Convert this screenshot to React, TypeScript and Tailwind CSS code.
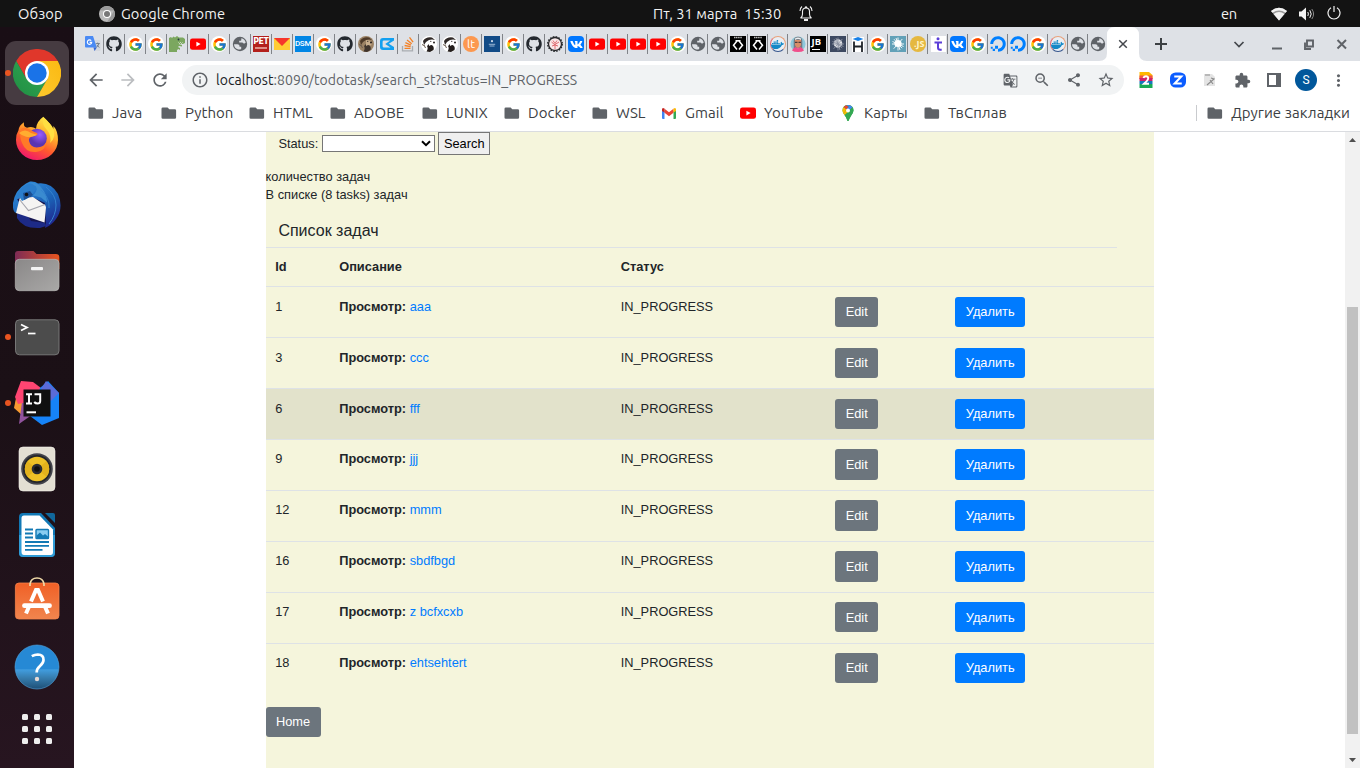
import React from "react";
import { FaGithub, FaVk, FaDocker, FaDigitalOcean } from "react-icons/fa";
import { FcGoogle } from "react-icons/fc";
import {
  MdArrowBack, MdArrowForward, MdRefresh, MdInfoOutline, MdGTranslate, MdOutlineZoomOut,
  MdShare, MdStarBorder, MdExtension, MdMoreVert,
} from "react-icons/md";

const UI = "font-[Ubuntu,'Noto_Sans',sans-serif]";

/* ---------- favicons ---------- */

const Google = () => (
  <span className="flex size-4 items-center justify-center rounded-full bg-white"><FcGoogle size={15} /></span>
);
const Github = () => <FaGithub size={16} color="#24292f" />;
const Globe = () => (
  <svg width="16" height="16" viewBox="0 0 16 16">
    <circle cx="8" cy="8" r="7.200" fill="#5f6368" />
    <path d="M2 8.200h3.500q2 0 2 1.600v.9h1.700v2.200q-1.600 1.200-3.600.4Q2.200 12 2 8.200z" fill="#dee1e6" />
    <path d="M9.300 2.300q3.700.8 4.400 4.500l-1.800.9q-.8-1.300-2-1.300H7.200V4.700h1.600q.5 0 .5-.7z" fill="#dee1e6" />
  </svg>
);
const YouTube = () => (
  <svg width="16" height="16" viewBox="0 0 16 16">
    <rect x="0" y="2.400" width="16" height="11.400" rx="2.400" fill="#f00" />
    <path d="M6.400 5.700v4.800l4.200-2.400z" fill="#fff" />
  </svg>
);
const Translate = () => (
  <svg width="16" height="16" viewBox="0 0 16 16">
    <path d="M6 4h8.600q1 0 1 1v9q0 1-1 1H9z" fill="#d5d8de" />
    <path d="M1 0h7l3.800 11.500H1q-1 0-1-1V1q0-1 1-1z" fill="#4a8af4" />
    <path d="M8.500 11.500h3.300L9.600 15z" fill="#3367d6" />
    <path d="M6.200 4.700A2.200 2.200 0 1 0 6.700 6.400H4.600" fill="none" stroke="#fff" strokeWidth="1.100" />
    <path d="M10.800 7.600h4M12.700 6.600v1M13.800 7.700q-.6 2.400-2.400 3.600M12 9q1 1.600 2.400 2.400" fill="none" stroke="#6b7785" strokeWidth=".9" />
  </svg>
);
const Dino = () => (
  <svg width="16" height="16" viewBox="0 0 16 16">
    <path d="M0 2l2-1 1 1 1.500-1.500L6 1.500 8 0l2 1.500h4l2 1.500v4l-2 1H9.500L13 9v1.500L10 10l-1 1 2 1v2l-1.500-1L8 14v2H0z" fill="#7ba75f" />
    <path d="M9.500 6.500l1 1 1-1 1 1 1-1" stroke="#fff" strokeWidth=".7" fill="none" />
    <circle cx="9.500" cy="3.500" r=".9" fill="#234" />
  </svg>
);
const Pet = () => (
  <span className="flex size-4 flex-col items-center bg-[#b3201c] font-['Roboto',sans-serif] text-[8.500px]/[11px] font-black tracking-[-0.2px] text-white">
    PET<span className="h-[2px] w-3 bg-[#df8e86]" />
  </span>
);
const Mail = () => (
  <svg width="16" height="16" viewBox="0 0 16 16"><path d="M0 2h16v12H0z" fill="#fc3" /><path d="M0 2h16L8 10z" fill="#f6352c" /></svg>
);
const Dsm = () => (
  <span className="flex size-4 items-center justify-center overflow-hidden bg-[#0086e5] font-['Roboto',sans-serif] text-[8px] font-medium tracking-[-0.3px] text-white">DSM</span>
);
const Beaver = ({ brown = false }: { brown?: boolean }) => (
  <svg width="16" height="16" viewBox="0 0 16 16">
    <circle cx="8" cy="8" r="8" fill={brown ? "#9b8264" : "#fff"} />
    <path d="M2 5Q5 .5 11 1.500l3 2.500-3-.5-3 .5-3 2-2 3z" fill={brown ? "#4d3a29" : "#302a28"} />
    <path d="M5.500 15.500q2-3 .5-5.500l2.500-2.500 2.500 1.500q2.500 2 1.500 5L9 16z" fill={brown ? "#3f342c" : "#241e1c"} />
    <path d="M8 4q4-.5 6 3l-1 2.500-3-.6-2 1z" fill={brown ? "#c7ad8b" : "#fff"} />
    <circle cx="13" cy="6.500" r="1" fill="#241e1c" /><circle cx="9.800" cy="5.300" r=".6" fill="#241e1c" />
    <path d="M3 9l1.500 3M1.500 8l1 2" stroke="#6b5d50" strokeWidth="1" />
  </svg>
);
const Cyan = () => (
  <svg width="16" height="16" viewBox="0 0 16 16"><path d="M1 5q0-3 3-3h11v2.500L9.800 7.700 15 11v3H4q-3 0-3-3zM3.600 5.800v4.400q0 1.400 1.400 1.400h6.500L6.200 8l5-3.600H5q-1.400 0-1.400 1.400z" fill="#12a0f0" fillRule="evenodd" /></svg>
);
const Stack = () => (
  <svg width="16" height="16" viewBox="0 0 16 16" fill="none"><path d="M2.500 10v4.800h10V10" stroke="#a9adb1" strokeWidth="1.300" /><path d="M4.500 12.300h6M4.600 9.500l6 1.200M5.400 6.700l5.500 2.500M7 4l4.700 3.800M9.500 1.300l3.600 4.900" stroke="#f48024" strokeWidth="1.300" /></svg>
);
const Lt = () => (
  <span className={`flex size-4 items-center justify-center rounded-full bg-[#fc984f] text-[12px] text-white ${UI}`}>lt</span>
);
const Navy = () => (
  <svg width="16" height="16" viewBox="0 0 16 16"><path d="M0 0h16v16H0z" fill="#114b87" /><circle cx="8" cy="5.200" r="1.100" fill="#cbd8e6" /><path d="M4.800 8.300h6.400M5.500 10h5" stroke="#a9c2dc" strokeWidth=".9" /></svg>
);
const Gear = () => (
  <svg width="16" height="16" viewBox="0 0 16 16">
    <circle cx="8" cy="8" r="6.500" fill="#f9e9e9" stroke="#26282b" strokeWidth="1.300" />
    <circle cx="8" cy="8" r="7.300" fill="none" stroke="#26282b" strokeWidth="1.300" strokeDasharray="1.600 1.300" />
    <path d="M8 13V8M8 9L4.500 6M8 8.500L12 6M5 10l3-1 3 1M6 4.500l2 3 2-3" stroke="#e06b70" fill="none" />
  </svg>
);
const Vk = () => (
  <span className="flex size-4 items-center justify-center rounded-[4px] bg-[#07f] text-white"><FaVk size={13} /></span>
);
const Bracket = () => (
  <svg width="16" height="16" viewBox="0 0 16 16">
    <path d="M0 0h16v16H0z" fill="#000" />
    <path d="M4 1.500h8" stroke="#bbb" strokeDasharray="1.300 .5" strokeWidth="1.300" />
    <path d="M7 5L3.500 9.200 7 13.500M9 5l3.500 4.200L9 13.500M5.500 4.700h5" fill="none" stroke="#fff" strokeWidth="1.500" />
  </svg>
);
const Docker = () => (
  <span className="flex size-4 items-center justify-center rounded-full border border-t-[#e9a27c] border-r-[#e9a27c] border-b-[#35558c] border-l-[#e46a72] bg-[#e8eef4]"><FaDocker size={13} color="#1488c6" /></span>
);
const Woman = () => (
  <svg width="16" height="16" viewBox="0 0 16 16">
    <circle cx="8" cy="8" r="7.600" fill="#8fc8dc" />
    <path d="M3.700 12V5Q4 .8 8 .8T12.300 5v7z" fill="#77797f" />
    <path d="M5 4h6v5q-1 3-3 3t-3-3z" fill="#d98d68" /><path d="M5 4q3-2 6 0V2.500Q8 .5 5 2.500z" fill="#e9edf0" />
    <path d="M5 6.300h2.500M8.500 6.300H11" stroke="#4b3b3b" strokeWidth="1.200" />
    <path d="M2 14.500q1-3 4-3.500l2 1.500 2-1.500q3 .5 4 3.500-2 1.500-6 1.500t-6-1.500z" fill="#f04f8b" />
  </svg>
);
const Jb = () => (
  <span className="flex size-4 flex-col justify-between bg-black px-[2px] pb-[2px] font-['Noto_Sans',sans-serif] text-[9.500px]/[11px] font-bold text-white">
    JB<span className="h-px w-2 bg-white" />
  </span>
);
const Burst = ({ dark = false }: { dark?: boolean }) => (
  <svg width="16" height="16" viewBox="0 0 16 16">
    <path d="M0 0h16v16H0z" fill={dark ? "#3d4961" : "#62a1b8"} />
    <circle cx="8" cy="7.500" r={dark ? "4.300" : "3.600"} fill={dark ? "#e1e3e8" : "#fff"} />
    <path d="M8 1.500v13M2 8h12M4 3.200l8 9M12.300 3L3.700 12.700M6 2l4 12M2.500 5.500l11 5" stroke={dark ? "#8c93a3" : "#fff"} strokeWidth=".9" />
  </svg>
);
const Hexlet = () => (
  <svg width="16" height="16" viewBox="0 0 16 16">
    <path d="M2 1h12v15H2z" fill="#fff" /><path d="M4 5.500V16M12 5.500V16M4 10.500h8" stroke="#20242a" strokeWidth="1.800" fill="none" /><path d="M2.500 3L8 1l5.500 2L8 5z" fill="#1680e8" />
  </svg>
);
const Js = () => (
  <span className="flex size-4 items-center justify-end rounded-full bg-[#e5b840] pr-px font-['Noto_Sans',sans-serif] text-[9px] font-bold text-[#fff4ca]">.JS</span>
);
const Tee = () => (
  <svg width="16" height="16" viewBox="0 0 16 16"><path d="M1 0h15v16H1z" fill="#fff" /><circle cx="8" cy="2.800" r="1.500" fill="#5b3fd8" /><path d="M4.500 6.500h7.500M8 6.500v5q0 2.300 2.200 2.300h1.500" stroke="#5b3fd8" strokeWidth="2" fill="none" /></svg>
);
const Ocean = () => <FaDigitalOcean size={16} color="#0080ff" />;

const tabs: React.ReactNode[] = [
  <Translate />, <Github />, <Google />, <Google />, <Dino />, <YouTube />, <Google />, <Globe />, <Pet />, <Mail />,
  <Dsm />, <Google />, <Github />, <Beaver brown />, <Cyan />, <Stack />, <Beaver />, <Beaver />, <Lt />, <Navy />,
  <Google />, <Github />, <Gear />, <Vk />, <YouTube />, <YouTube />, <YouTube />, <YouTube />, <Google />, <Globe />,
  <Globe />, <Bracket />, <Bracket />, <Docker />, <Woman />, <Jb />, <Burst dark />, <Hexlet />, <Google />, <Burst />,
  <Js />, <Tee />, <Vk />, <Google />, <Ocean />, <Ocean />, <Google />, <Docker />, <Globe />, <Globe />,
];

/* ---------- dock icons ---------- */

const Chrome = () => (
  <svg width="48" height="48" viewBox="0 0 48 48">
    <defs>
      <linearGradient id="cy" x1="1" y1="0" x2="0" y2="1"><stop stopColor="#fbb912" /><stop offset="1" stopColor="#fdc92e" /></linearGradient>
      <linearGradient id="cg" x1="0" y1="1" x2="1" y2="0"><stop stopColor="#1f8e43" /><stop offset="1" stopColor="#34a853" /></linearGradient>
    </defs>
    <path d="M3.200 12A24 24 0 0 1 44.800 12H24L13.600 30z" fill="#e0372b" />
    <path d="M3.200 12A24 24 0 0 0 24 48L34.400 30H13.600z" fill="url(#cg)" />
    <path d="M24 48A24 24 0 0 0 44.800 12H24L34.400 30z" fill="url(#cy)" />
    <circle cx="24" cy="24" r="12" fill="#fff" /><circle cx="24" cy="24" r="9.700" fill="#1a73e8" />
  </svg>
);
const Firefox = () => (
  <svg width="48" height="48" viewBox="0 0 48 48">
    <defs>
      <linearGradient id="ff" x1=".8" y1="0" x2=".3" y2="1"><stop stopColor="#fff44f" /><stop offset=".35" stopColor="#ffb12c" /><stop offset=".65" stopColor="#ff5a2d" /><stop offset="1" stopColor="#f0156f" /></linearGradient>
      <radialGradient id="fp" cx=".65" cy=".3"><stop stopColor="#9a5cff" /><stop offset="1" stopColor="#5a35b0" /></radialGradient>
    </defs>
    <path d="M30.300 1.700q-7 5-7.300 12-4-3-9-1-4-1-3-5.500-5 3-5.500 8Q3 19 3 25a21 20 0 0 0 42 0q0-9-4.500-14 0 3-1 4-1-6-9.200-13.300z" fill="url(#ff)" />
    <circle cx="24" cy="23.500" r="9.800" fill="url(#fp)" />
    <path d="M8 14q3-3 8 0 5 3 8 4 2 2-3 3-6 1-5 5 2 8 11 6 5-1 7-6-1 10-11 11T9 28Q6 21 8 14z" fill="#ff7a27" />
    <path d="M6 18q6-5 12 0 4 1 5.500 1.500-.5 1.700-4 2-4 1-7 0-4-1-6.500-3.500z" fill="#ffad30" />
    <path d="M31 3q-3 6 3 12 5 6 3 13 7-6 3-15-2-4-9-10z" fill="#ffdf42" />
  </svg>
);
const Thunderbird = () => (
  <svg width="48" height="48" viewBox="0 0 48 48">
    <defs><linearGradient id="tb" x1=".2" y1="0" x2=".8" y2="1"><stop stopColor="#2f8ede" /><stop offset=".55" stopColor="#1b5fb4" /><stop offset="1" stopColor="#20208a" /></linearGradient></defs>
    <path d="M17 .5q5-.5 8 2Q38 1 45 13q6 14-2 25-4 6-11 9l1-6-14-2-12-7Q-1 34 0 22 2 9 13 2.500z" fill="url(#tb)" />
    <path d="M4 30l28 11 1 4-6 2Q10 48 4 37z" fill="#1d2a86" />
    <path d="M4 18l8-5 20 9 1 20-15-2z" fill="#171650" />
    <path d="M7 16l1 1 12-1 12.500 8.500.5 2-1.500 15L3 32z" fill="#f5f4f3" /><path d="M6.500 18.500L15.500 29.500 32 23.500" fill="none" stroke="#a5a5ad" strokeWidth="1.100" />
    <path d="M3 19q2-12 12-16l10 1q-1 4-4 7-2 5-12 9l-2-3z" fill="#2b7dcb" />
    <path d="M17 1.500q9 0 12 6 5 6 5 14l-6-5-8-2q5-5 3-9z" fill="#3a8bd0" />
    <path d="M10 12l7-2 3 4-9 5z" fill="#1c4f93" /><circle cx="13.500" cy="13.500" r="1.800" fill="#111" />
    <path d="M33 6q10 8 10 18t-7 19M28 9q9 8 8 18" fill="none" stroke="#3482cf" strokeWidth="1" />
  </svg>
);
const Files = () => (
  <svg width="48" height="48" viewBox="0 0 48 48">
    <defs>
      <linearGradient id="fb"><stop stopColor="#7d2b55" /><stop offset="1" stopColor="#e9551f" /></linearGradient>
      <linearGradient id="fg" x1="0" y1="0" x2="1" y2="1"><stop stopColor="#8a8888" /><stop offset="1" stopColor="#a9a8a7" /></linearGradient>
    </defs>
    <path d="M5 4h15.500l3 3H43q3.300 0 3.300 3v12H2V7q0-3 3-3z" fill="url(#fb)" />
    <rect x="2.300" y="12.300" width="43.700" height="31.400" rx="4" fill="url(#fg)" stroke="#b9b7b6" strokeWidth=".7" />
    <rect x="18" y="20" width="12" height="3.200" rx="1" fill="#f4f4f4" />
  </svg>
);
const Terminal = () => (
  <svg width="48" height="48" viewBox="0 0 48 48">
    <rect x="2.500" y="6.800" width="43.500" height="35" rx="4" fill="#4c4c4c" stroke="#777" />
    <path d="M8 11.500l6 3L8 17.500" fill="none" stroke="#fff" strokeWidth="1.800" /><path d="M15 20.500h7.500" stroke="#fff" strokeWidth="1.700" />
  </svg>
);
const Idea = () => (
  <svg width="48" height="48" viewBox="0 0 48 48">
    <path d="M3 19l9 4-2 14-9-8z" fill="#f79a32" /><path d="M9 23l14 10L6 45z" fill="#91539d" />
    <path d="M8 2l12 1 8 6-5 12-18 4-3-7z" fill="#ff4572" />
    <path d="M35 2l11 12v25L29 46 17 37 27 9z" fill="#1683f7" /><path d="M33 2l13 12-8 8-10-12z" fill="#5b6bd8" />
    <rect x="10.500" y="10.500" width="27" height="27" fill="#101010" />
    <path d="M13 15.200h6M16 15.200v9M13 24.500h6M21.500 15.200h5.700V22q0 2.500-2.700 2.500-2 0-3.300-1.500" fill="none" stroke="#fff" strokeWidth="2" /><path d="M13.500 33.300h9.500" stroke="#fff" strokeWidth="2" />
  </svg>
);
const Speaker = () => (
  <svg width="48" height="48" viewBox="0 0 48 48">
    <rect x="6" y="2" width="36" height="44" rx="4" fill="#e3dfd3" stroke="#f5f3ed" strokeWidth=".6" />
    <circle cx="24" cy="24" r="15.800" fill="#42434b" /><circle cx="24" cy="24" r="14" fill="#25262a" /><circle cx="24" cy="24" r="12.200" fill="#eec126" />
    <path d="M24 24L14.500 16.300A12.200 12.200 0 0 0 14.500 31.700zM24 24l9.500-7.700A12.200 12.200 0 0 1 33.500 31.700z" fill="#e3b21c" />
    <circle cx="24" cy="24" r="5.300" fill="#2a2c31" /><circle cx="24" cy="24" r="2.800" fill="#111" />
  </svg>
);
const Writer = () => (
  <svg width="48" height="48" viewBox="0 0 48 48">
    <path d="M10 2h18l14 15v25q0 4-4 4H10q-4 0-4-4V6q0-4 4-4z" fill="#1178b5" /><path d="M6 24h36v18q0 4-4 4H10q-4 0-4-4z" fill="#2f9cd6" />
    <path d="M11 4.500h15.500L40 18.500V41q0 3-2.500 3H11q-2.500 0-2.500-3V7q0-2.500 2.500-2.500z" fill="#fff" />
    <path d="M32 2h8q2 0 2 2v8z" fill="#10679b" />
    <path d="M12 18.500h8M12 22.500h8M12 26.500h8M12 31h24M12 34.800h24M12 38.800h17.500" stroke="#1279b4" strokeWidth="1.800" />
    <rect x="23" y="18.500" width="12.500" height="9" rx=".8" fill="#89cdf1" stroke="#1279b4" strokeWidth="1.400" /><path d="M23.500 27v-2.500l3.500-3 3 3 2-1.500 3 2.500V27z" fill="#147ab5" />
  </svg>
);
const Software = () => (
  <svg width="48" height="48" viewBox="0 0 48 48">
    <defs><linearGradient id="sw" x2="0" y2="1"><stop stopColor="#f06026" /><stop offset="1" stopColor="#f1854e" /></linearGradient></defs>
    <rect x="2.400" y="6" width="43.600" height="36" rx="3.500" fill="url(#sw)" stroke="#f6834b" strokeWidth=".8" />
    <path d="M17 9V7q1-6 7-6t7 6v2" fill="none" stroke="#efd9a7" strokeWidth="1.700" />
    <path d="M13 36.500l3.700-8.500M31.300 28l3.700 8.500M18 24.500L23 13h2l5 11.500" fill="none" stroke="#fff" strokeWidth="4" /><path d="M11.500 28.700h25" stroke="#fff" strokeWidth="4.800" strokeLinecap="round" />
  </svg>
);
const Help = () => (
  <svg width="48" height="48" viewBox="0 0 48 48">
    <defs><linearGradient id="hl" x2="0" y2="1"><stop stopColor="#2689d5" /><stop offset=".55" stopColor="#2689d5" /><stop offset=".56" stopColor="#419ddf" /><stop offset=".75" stopColor="#367cad" /><stop offset="1" stopColor="#1e4f76" /></linearGradient></defs>
    <circle cx="24" cy="24" r="22" fill="url(#hl)" stroke="#51a7e6" strokeWidth=".6" />
    <path d="M18.800 13.200q3-1.700 6-1.700 6 .3 5.700 5.500 0 3-3.500 6-3.500 3-3.300 6.500" fill="none" stroke="#fff" strokeWidth="2.700" /><circle cx="24" cy="36" r="2.200" fill="#e5d9d5" />
  </svg>
);

const dock = [
  { icon: <Chrome />, running: true, active: true },
  { icon: <Firefox /> }, { icon: <Thunderbird /> }, { icon: <Files /> },
  { icon: <Terminal />, running: true }, { icon: <Idea />, running: true },
  { icon: <Speaker /> }, { icon: <Writer /> }, { icon: <Software /> }, { icon: <Help /> },
];

/* ---------- bookmarks ---------- */

const Folder = () => (
  <svg width="16" height="16" viewBox="0 0 16 16"><path d="M1.800 2.500h4.800l1.700 1.700h5.500q1.300 0 1.300 1.300v7q0 1.300-1.300 1.300H1.800Q.5 13.800.5 12.500V3.800q0-1.300 1.300-1.300z" fill="#5f6368" /></svg>
);
const Gmail = () => (
  <svg width="16" height="16" viewBox="0 0 16 16">
    <path d="M1 4l2.500 2v8H2q-1 0-1-1z" fill="#4285f4" /><path d="M15 4l-2.500 2v8H14q1 0 1-1z" fill="#34a853" />
    <path d="M3.500 3.800L8 7.200l4.500-3.400v4L8 11.200 3.500 7.800z" fill="#ea4335" /><path d="M1 4.500Q1 2 3.500 3.500v4L1 6z" fill="#c5221f" /><path d="M15 4.500q0-2.500-2.500-1v4L15 6z" fill="#fbbc04" />
  </svg>
);
const MapPin = () => (
  <svg width="16" height="16" viewBox="0 0 16 16">
    <path d="M8 0q5.500 0 5.500 5.500 0 2-2 4.500T8.700 15.500q-.7 1-1.400 0Q6.500 12.500 4.500 10t-2-4.500Q2.500 0 8 0z" fill="#34a853" />
    <path d="M3.800 2L6.500 4.300 3.600 8.500Q2.500 7 2.500 5.200T3.800 2z" fill="#fbbc04" /><path d="M3.800 2Q5 .5 6.500.2L8.500 2 6.300 4.500z" fill="#ea4335" />
    <path d="M6.500.2Q10.500-.7 12.500 2.300L9.500 5.500 6.500 4.300 9 1.700z" fill="#4285f4" /><path d="M4.500 10l5-5 3-2.700q1 2 1 3.300-.3 2-2 4.300l-2.800 5.600q-.7 1-1.400 0Q6.300 12 4.500 10z" fill="#34a853" /><path d="M3.500 8.400l3-3.800 3 1L4.500 10z" fill="#fbbc04" />
    <circle cx="8" cy="5.400" r="2" fill="#fff" />
  </svg>
);

const bookmarks = [
  { label: "Java", box: "w-[73px]", icon: <Folder /> },
  { label: "Python", box: "w-[88px]", icon: <Folder /> },
  { label: "HTML", box: "w-[81px]", icon: <Folder /> },
  { label: "ADOBE", box: "w-[92px]", icon: <Folder /> },
  { label: "LUNIX", box: "w-[82px]", icon: <Folder /> },
  { label: "Docker", box: "w-[88px]", icon: <Folder /> },
  { label: "WSL", box: "w-[69px]", icon: <Folder /> },
  { label: "Gmail", box: "w-[79px]", icon: <Gmail /> },
  { label: "YouTube", box: "w-[100px]", icon: <YouTube /> },
  { label: "Карты", box: "w-[84px]", icon: <MapPin /> },
  { label: "ТвСплав", box: "w-[100px]", icon: <Folder /> },
];

const tasks = [
  [1, "aaa"], [3, "ccc"], [6, "fff"], [9, "jjj"], [12, "mmm"], [16, "sbdfbgd"], [17, "z bcfxcxb"], [18, "ehtsehtert"],
] as const;

const COLS = "grid grid-cols-[64px_281.500px_214.500px_120px_1fr]";

function SystemBar() {
  return (
    <header className={`flex h-[27px] shrink-0 items-center bg-[#131313] text-[14.667px] text-[#f2f2f2] ${UI}`}>
      <span className="w-[99px] pl-[18px] tracking-[0.1px]">Обзор</span>
      <svg width="16" height="16" viewBox="0 0 16 16"><circle cx="8" cy="8" r="8" fill="#b9b9b9" /><path d="M1 4.500A8 8 0 0 1 15 4.500H8zM8 16l4-6 3-5.500A8 8 0 0 1 8 16z" fill="#9a9a9a" /><circle cx="8" cy="8" r="4" fill="#fff" /><circle cx="8" cy="8" r="3" fill="#777" /></svg>
      <span className="w-[538px] pl-[6px] tracking-[0.1px]">Google Chrome</span>
      <span className="w-[146px] whitespace-pre tracking-[0.060px]">Пт, 31 марта  15:30</span>
      <svg className="mb-px" width="14" height="17" viewBox="0 0 14 17" fill="none" stroke="#f2f2f2" strokeWidth="1.100"><path d="M1.500 13h11q-2-1-2-4V6.500q0-3.500-3.500-3.500T3.500 6.500V9q0 3-2 4zM6 2.500q1-1.500 2 0M1 6q0-3 2-4.500M13 6q0-3-2-4.500" /><path d="M5 15h4" strokeWidth="2" /></svg>
      <span className="ml-auto w-[50px] tracking-[-0.3px]">en</span>
      <svg width="16" height="14" viewBox="0 0 16 14"><path d="M0 4q8-6.500 16 0L8 13.500z" fill="#999" /><path d="M0 4q8-6.500 16 0l-1.500 1.800Q8 1 1.500 5.800z" fill="#f2f2f2" /><path d="M2.500 7Q8 3 13.500 7L8 13.500z" fill="#f2f2f2" /></svg>
      <svg className="ml-3" width="16" height="14" viewBox="0 0 16 14" fill="none" stroke="#f2f2f2"><path d="M0 4.500h2.500L7 .5v13L2.500 9.500H0z" fill="#f2f2f2" stroke="none" /><path d="M8.800 5q1.200 2 0 4M10.800 3.200q2.800 3.800 0 7.600" /><path d="M12.800 2q3.600 5 0 10" stroke="#888" /></svg>
      <svg className="mr-[19px] ml-3 mb-px" width="14" height="14" viewBox="0 0 14 14" fill="none" stroke="#f2f2f2" strokeWidth="1.200"><path d="M4 1.800a6 6 0 1 0 6 0M7 0v6" /></svg>
    </header>
  );
}

function Dock() {
  return (
    <nav className="flex w-[74px] shrink-0 flex-col bg-linear-to-b from-[#190e15] via-[#1b1016] to-[#271520] pt-[13px]">
      {dock.map((d, i) => (
        <div key={i} className="flex h-[66px] items-center">
          <span className={`ml-[5px] size-[6px] rounded-full ${d.running ? "bg-[#e95420]" : "bg-transparent"} ${d.active ? "z-10" : ""}`} />
          <span className={`-ml-[6px] flex size-16 items-center justify-center rounded-[11px] ${d.active ? "bg-[#463b41]" : ""}`}>{d.icon}</span>
        </div>
      ))}
      <div className="mt-[14px] ml-[22px] grid w-[30px] grid-cols-3 gap-[6px]">
        {Array.from({ length: 9 }, (_, i) => <span key={i} className="size-[6px] rounded-[1.500px] bg-[#eee]" />)}
      </div>
    </nav>
  );
}

function TabStrip() {
  return (
    <div className="flex h-[34px] shrink-0 bg-[#dee1e6] pl-[9px]">
      {tabs.map((t, i) => (
        <div key={i} className={`flex h-[34px] shrink-0 items-center ${i < 25 ? "w-[21px]" : "w-[20px]"}`}>
          <span className={`flex items-center justify-center ${i < 25 ? "w-[20px]" : "w-[19px]"}`}>{t}</span>
          {i < 49 && <span className="h-5 w-px bg-[#808388]" />}
        </div>
      ))}
      <svg className="-ml-[9px] shrink-0" width="48" height="34" viewBox="0 0 48 34">
        <path d="M0 34q8 0 8-8V8q0-8 8-8h16q8 0 8 8v18q0 8 8 8z" fill="#fff" />
        <path d="M20.200 13.200l7.600 7.600M27.800 13.200l-7.600 7.600" stroke="#45484d" strokeWidth="1.500" />
      </svg>
      <svg width="213" height="34" viewBox="0 0 213 34" className="shrink-0" fill="none" stroke="#45484d" strokeWidth="1.700">
        <path d="M8 17h12M14 11v12" stroke="#3c4043" strokeWidth="2" />
        <path d="M87.500 15l4.500 4.500 4.500-4.500" />
        <path d="M125 21.500h10" stroke="#5f6368" strokeWidth="2" />
        <path d="M160 13.500h6v6h-6zM158 15.500v6.500h6" stroke="#5f6368" strokeWidth="1.900" />
        <path d="M190.500 13l8.500 8.500M199 13l-8.500 8.500" stroke="#5f6368" strokeWidth="2" />
      </svg>
    </div>
  );
}

function Toolbar() {
  return (
    <div className="flex h-[38px] shrink-0 items-center bg-white pl-[12px] text-[#5f6368]">
      <MdArrowBack size={20} /><MdArrowForward className="ml-[12px]" size={20} color="#bbbdc0" /><MdRefresh className="ml-[12px]" size={20} />
      <div className={`ml-3 flex h-[30px] w-[942px] shrink-0 items-center rounded-full bg-[#f1f3f4] text-[14px] ${UI}`}>
        <MdInfoOutline className="ml-[9px]" size={18} />
        <span className="ml-[7px] tracking-[0.060px]"><span className="text-[#202124]">localhost</span>:8090/todotask/search_st?status=IN_PROGRESS</span>
        <MdGTranslate className="ml-auto" size={15} /><MdOutlineZoomOut className="ml-[15px]" size={18} /><MdShare className="ml-[15px]" size={16} /><MdStarBorder className="mr-[9px] ml-[15px]" size={18} />
      </div>
      <svg className="ml-[15px]" width="14" height="16" viewBox="0 0 14 16">
        <path d="M1 0h9l3.500 3v4H.5V.5z" fill="#ffb800" /><path d="M.5 3.500h13V7H.5z" fill="#ef5545" /><path d="M.5 6h13v3H.5z" fill="#cf226b" /><path d="M.5 9h13v3H.5z" fill="#1678b9" /><path d="M.5 12h13v4H.5z" fill="#18aa57" />
        <path d="M4.500 6Q5 4.200 7 4.200t2.200 2Q9.200 8 5 11.700h5" fill="none" stroke="#fff" strokeWidth="1.900" />
      </svg>
      <svg className="ml-[17px]" width="16" height="16" viewBox="0 0 17 16"><rect width="17" height="16" rx="6" fill="#0b5cff" /><path d="M4.500 4.200h7.500l-7 7.600h7.500" fill="none" stroke="#fff" strokeWidth="2.200" /></svg>
      <svg className="ml-[17px]" width="14" height="14" viewBox="0 0 14 14"><path d="M1 1h8l3 3v9H1z" fill="#e4e4e4" /><path d="M2 2h5M8 5l3 1-7 6M7 7l3 4" fill="none" stroke="#8c8c8c" strokeWidth="1.200" /></svg>
      <MdExtension className="ml-[17px]" size={17} />
      <svg className="ml-[16px]" width="14" height="14" viewBox="0 0 14 14"><path d="M1 1h12v12H1z" fill="none" stroke="#5f6368" strokeWidth="2" /><path d="M9 1h4v12H9z" fill="#5f6368" /></svg>
      <span className="ml-[14px] flex size-[22px] items-center justify-center rounded-full bg-[#01579b] font-['Roboto',sans-serif] text-[12px] text-white">S</span>
      <MdMoreVert className="ml-[12px]" size={19} />
    </div>
  );
}

function Bookmarks() {
  return (
    <div className={`flex h-[33px] shrink-0 items-center border-b border-[#dadce0] bg-white pb-[4px] pl-[14px] text-[15px] text-[#3c4043] ${UI}`}>
      {bookmarks.map((b) => (
        <span key={b.label} className={`flex shrink-0 items-center gap-[8px] ${b.box}`}>{b.icon}<span className="tracking-[0.050px]">{b.label}</span></span>
      ))}
      <span className="mr-[10px] ml-auto flex shrink-0 items-center"><span className="mr-[10px] h-4 w-px bg-[#c9cbce]" /><Folder /><span className="ml-2 tracking-[0.060px]">Другие закладки</span></span>
    </div>
  );
}

function Page() {
  return (
    <main className="h-full w-[888.400px] shrink-0 bg-[#f5f5dc] font-['Liberation_Sans',Arial,sans-serif] text-[12.800px]/[18.400px] text-[#212529]">
      <form className="flex h-[23px] items-center pl-[12.800px]" onSubmit={(e) => e.preventDefault()}>
        <label className="pt-px">Status:</label>
        <span className="ml-[4px] flex h-[17px] w-[113px] items-center justify-end border border-[#767676] bg-white pr-[3px]">
          <svg width="10" height="7" viewBox="0 0 10 7"><path d="M1 1.200l4 4 4-4" fill="none" stroke="#000" strokeWidth="2" /></svg>
        </span>
        <button className="ml-[3px] h-[23px] w-[52px] border border-[#767676] bg-[#efefef] pt-px text-[12.800px] text-black">Search</button>
      </form>
      <p className="mt-[12.500px]">количество задач<br />В списке (8 tasks) задач</p>
      <h2 className="mt-[14px] h-[29px] pl-[12.800px] text-[16px]/[26px]">Список задач</h2>
      <div className="h-px w-[851px] bg-[#dee2e6]" />
      <div className={`${COLS} h-[38px] items-center font-bold`}>
        <span className="pl-[9.600px]">Id</span><span className="pl-[9.600px]">Описание</span><span className="pl-[9.600px]">Статус</span>
      </div>
      {tasks.map(([id, name]) => (
        <div key={id} className={`${COLS} h-[50.900px] items-start border-t border-[#dee2e6] pt-[9.450px] ${id === 6 ? "bg-[#e2e2cb]" : ""}`}>
          <span className="pl-[9.600px] leading-[20.400px]">{id}</span>
          <span className="pl-[9.600px] leading-[20.400px]"><b>Просмотр:</b> <a className="text-[#007bff]">{name}</a></span>
          <span className="pl-[9.600px] leading-[20.400px]">IN_PROGRESS</span>
          <span className="pl-[9.600px]"><button className="block h-[30.400px] w-[43px] rounded-[3px] bg-[#6c757d] pt-px text-white">Edit</button></span>
          <span className="pl-[9.600px]"><button className="block h-[30.400px] w-[70px] rounded-[3px] bg-[#007bff] pt-px text-white">Удалить</button></span>
        </div>
      ))}
      <button className="mt-[13.500px] block h-[30px] w-[55px] rounded-[3px] bg-[#6c757d] pt-px text-white">Home</button>
    </main>
  );
}

export default function App() {
  return (
    <div className="flex h-[768px] w-[1360px] flex-col overflow-hidden">
      <SystemBar />
      <div className="flex min-h-0 flex-1">
        <Dock />
        <div className="flex min-w-0 flex-1 flex-col bg-white">
          <TabStrip />
          <Toolbar />
          <Bookmarks />
          <div className="flex min-h-0 flex-1 pl-[191.600px]">
            <Page />
            <div className="ml-auto flex w-[15px] shrink-0 flex-col items-center bg-[#f1f1f1]">
              <svg width="15" height="15" viewBox="0 0 15 15"><path d="M4 10h7L7.500 6z" fill="#505050" /></svg>
              <span className="mt-[160px] h-[427px] w-[11px] bg-[#c1c1c1]" />
              <svg className="mt-auto" width="15" height="15" viewBox="0 0 15 15"><path d="M4 5h7L7.500 9z" fill="#505050" /></svg>
            </div>
          </div>
        </div>
      </div>
    </div>
  );
}
